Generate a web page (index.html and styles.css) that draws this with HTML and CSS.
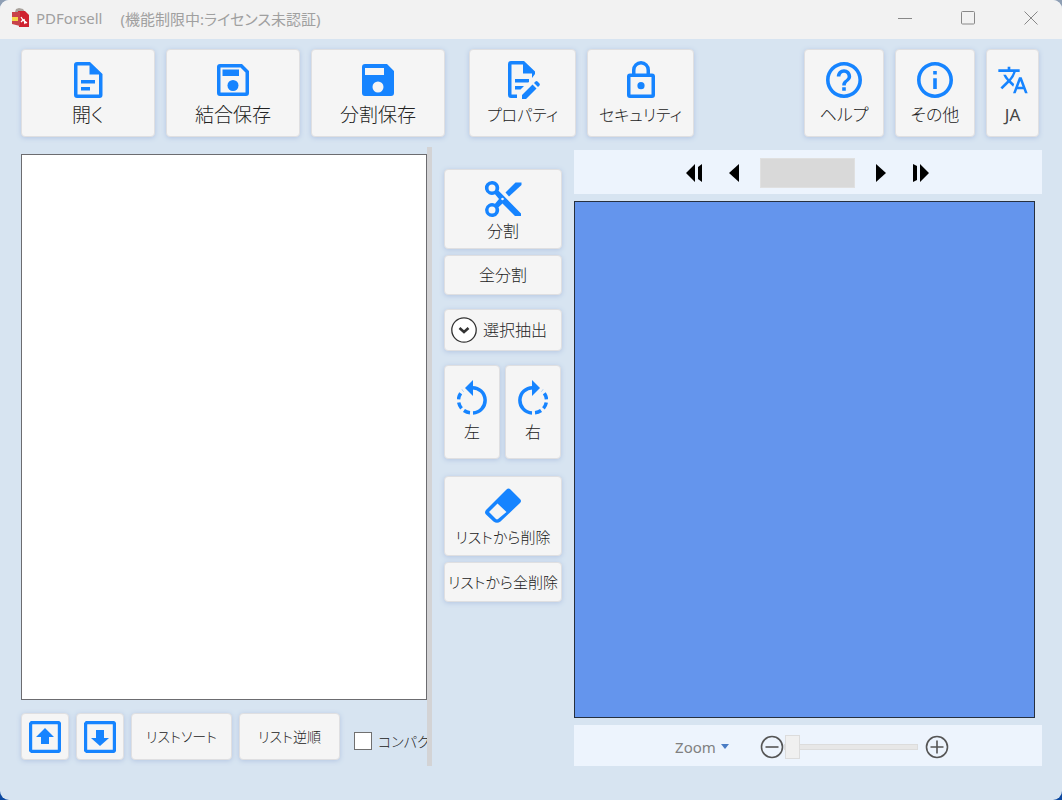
FILE: index.html
```html
<!DOCTYPE html>
<html lang="ja">
<head>
<meta charset="utf-8">
<meta name="viewport" content="width=device-width, initial-scale=1">
<title>PDForsell</title>
<link rel="stylesheet" href="styles.css">
</head>
<body>
<div class="window">
  <header class="titlebar">
    <svg class="app-icon" width="20" height="20" viewBox="0 0 20 20" aria-hidden="true">
      <path d="M4 4 5 1l3-1 4 1 2 3-2 3H4z" fill="#a9a29c"/>
      <path d="M7 3h7l4 4v12H8z" fill="#cf2230"/>
      <path d="M1 4h8v14l-8-2z" fill="#c8434a"/>
      <path d="M1 9h6v4H1z" fill="#f6d64a"/>
      <path d="M10 9l2 3 4 3M12 12l-2 2M13 11l1 5" stroke="#fff" stroke-width="1.300" fill="none"/>
    </svg>
    <h1 class="title"><span>PDForsell</span><span>(機能制限中:ライセンス未認証)</span></h1>
    <div class="window-controls">
      <button class="plain" aria-label="最小化"><svg width="14" height="14" viewBox="0 0 14 14"><path d="M0 7.500h14"/></svg></button>
      <button class="plain" aria-label="最大化"><svg width="14" height="14" viewBox="0 0 14 14"><rect x=".5" y=".5" width="13" height="12.500" rx="1"/></svg></button>
      <button class="plain" aria-label="閉じる"><svg width="14" height="14" viewBox="0 0 14 14"><path d="M.5.5l13 13M13.500.5l-13 13"/></svg></button>
    </div>
  </header>

  <nav class="toolbar">
    <div class="group">
      <button class="btn tool wide">
        <svg width="36" height="36" viewBox="0 0 36 36"><path fill-rule="evenodd" d="M7 0h13l12.500 12V33a3 3 0 0 1-3 3H7a3 3 0 0 1-3-3V3a3 3 0 0 1 3-3zM7.500 3.500v29H29V12.500H19.500v-9z"/><path d="M11 18h14v3.500H11zM11 25h9v3.500h-9z"/></svg>
        <span>開く</span></button>
      <button class="btn tool wide">
        <svg width="36" height="36" viewBox="0 0 36 36"><path fill-rule="evenodd" d="M5 2h22l7 7v22a3 3 0 0 1-3 3H5a3 3 0 0 1-3-3V5a3 3 0 0 1 3-3zM5.500 5.500v25h25V10.500l-5-5z"/><path d="M7.500 7.500H24V14H7.500z"/><circle cx="18" cy="23.500" r="5.500"/></svg>
        <span>結合保存</span></button>
      <button class="btn tool wide">
        <svg width="36" height="36" viewBox="0 0 36 36"><path fill-rule="evenodd" d="M5 2h22l7 7v22a3 3 0 0 1-3 3H5a3 3 0 0 1-3-3V5a3 3 0 0 1 3-3zM5 6v7h19V6zM18 19.500a5.500 5.500 0 1 0 0 11 5.500 5.500 0 0 0 0-11z"/></svg>
        <span>分割保存</span></button>
    </div>
    <div class="group">
      <button class="btn tool medium">
        <svg width="36" height="38" viewBox="0 0 36 38"><path d="M6 0h13l11 10.500v2.500l-3 4v-4.500H18V3.500H6.500v30H12V37H6a3 3 0 0 1-3-3V3a3 3 0 0 1 3-3z"/><path d="M10 18h14v3l-1 .5H10zM10 25h9l-3.500 3.500H10zM17 34l10.500-10.500 4 4L21 38h-4zM29 22l1.500-1.500q1-.8 2 0l2 2q.8 1 0 2L33 26z"/></svg>
        <span>プロパティ</span></button>
      <button class="btn tool medium">
        <svg width="36" height="38" viewBox="0 0 36 38"><path fill-rule="evenodd" d="M9 12.500V9a9 9 0 0 1 18 0v3.500h2a3 3 0 0 1 3 3V34a3 3 0 0 1-3 3H7a3 3 0 0 1-3-3V15.500a3 3 0 0 1 3-3zM12.500 12.500h11V9a5.500 5.500 0 0 0-11 0zM7.500 16v17.500h21V16z"/><circle cx="18" cy="24.700" r="3.600"/></svg>
        <span>セキュリティ</span></button>
    </div>
    <div class="group end">
      <button class="btn tool small">
        <svg width="36" height="36" viewBox="2 2 20 20"><path d="M11 18h2v-2h-2v2zm1-16C6.480 2 2 6.480 2 12s4.480 10 10 10 10-4.480 10-10S17.520 2 12 2zm0 18c-4.410 0-8-3.590-8-8s3.590-8 8-8 8 3.590 8 8-3.590 8-8 8zm0-14c-2.210 0-4 1.790-4 4h2c0-1.100.9-2 2-2s2 .9 2 2c0 2-3 1.750-3 5h2c0-2.250 3-2.500 3-5 0-2.210-1.790-4-4-4z"/></svg>
        <span>ヘルプ</span></button>
      <button class="btn tool small">
        <svg width="36" height="36" viewBox="2 2 20 20"><path d="M11 7h2v2h-2zm0 4h2v6h-2zm1-9C6.480 2 2 6.480 2 12s4.480 10 10 10 10-4.480 10-10S17.520 2 12 2zm0 18c-4.410 0-8-3.590-8-8s3.590-8 8-8 8 3.590 8 8-3.590 8-8 8z"/></svg>
        <span>その他</span></button>
      <button class="btn tool tiny">
        <svg width="32" height="36" viewBox="0 0 24 24"><path d="M12.870 15.070l-2.540-2.510.03-.03A17.520 17.520 0 0 0 14.070 6H17V4h-7V2H8v2H1v1.990h11.170C11.500 7.920 10.440 9.750 9 11.350 8.070 10.320 7.300 9.190 6.690 8h-2c.73 1.630 1.730 3.170 2.980 4.560l-5.090 5.020L4 19l5-5 3.110 3.110.76-2.040zM18.500 10h-2L12 22h2l1.120-3h4.750L21 22h2l-4.500-12zm-2.620 7l1.620-4.330L19.120 17h-3.240z"/></svg>
        <span>JA</span></button>
    </div>
  </nav>

  <main class="workspace">
    <section class="files">
      <div class="file-list" role="listbox" aria-label="ファイル一覧"></div>
      <div class="list-tools">
        <button class="btn square" aria-label="上へ"><svg width="32" height="32" viewBox="0 0 32 32"><rect x="1.500" y="1.500" width="29" height="29" rx="2" fill="none" stroke="#1684ff" stroke-width="3.400"/><path d="M16 7l9 9h-5v7h-8v-7H7z"/></svg></button>
        <button class="btn square" aria-label="下へ"><svg width="32" height="32" viewBox="0 0 32 32"><rect x="1.500" y="1.500" width="29" height="29" rx="2" fill="none" stroke="#1684ff" stroke-width="3.400"/><path d="M16 25l9-8h-5V9h-8v8H7z"/></svg></button>
        <button class="btn sort">リストソート</button>
        <button class="btn sort">リスト逆順</button>
        <label class="compact"><input type="checkbox"><span>コンパク</span></label>
      </div>
    </section>
    <div class="splitter" role="separator"></div>

    <section class="actions">
      <button class="btn stack">
        <svg width="38" height="38" viewBox="0 0 38 38"><path fill-rule="evenodd" d="M8 1a7 7 0 0 1 6.600 9.800L37 33.500V36h-6L18.500 23.500l-4 3.700A7 7 0 1 1 11 23.700l4-4.700-4-4.700A7 7 0 1 1 8 1zm0 3.500a3.500 3.500 0 1 0 0 7 3.500 3.500 0 0 0 0-7zm0 22a3.500 3.500 0 1 0 0 7 3.500 3.500 0 0 0 0-7zM18.500 17.700a1.300 1.300 0 1 0 0 2.600 1.300 1.300 0 0 0 0-2.600z"/><path d="M21.500 12.500 31.500 2.500h6V5L25 16.500z"/></svg>
        <span>分割</span></button>
      <button class="btn single">全分割</button>
      <button class="btn extract">
        <svg width="26" height="26" viewBox="0 0 26 26"><circle cx="13" cy="13" r="12.200" fill="#fff" stroke="#333" stroke-width="1.300"/><path d="M8.500 11l4.500 4 4.500-4" fill="none" stroke="#333" stroke-width="2.600"/></svg>
        <span>選択抽出</span></button>
      <div class="rotate">
        <button class="btn turn">
          <svg width="30" height="36" viewBox="0 0 30 36"><path d="M16 0v16L8 8z"/><path d="M15 7.700a12.600 12.600 0 0 1 1 25.200" class="arc"/><path d="M13 32.700a12.600 12.600 0 0 1-11.500-12.400 12.600 12.600 0 0 1 4.500-9.700" class="arc" stroke-dasharray="6.500 3.200"/></svg>
          <span>左</span></button>
        <button class="btn turn">
          <svg width="30" height="36" viewBox="0 0 30 36"><g transform="matrix(-1 0 0 1 30 0)"><path d="M16 0v16L8 8z"/><path d="M15 7.700a12.600 12.600 0 0 1 1 25.200" class="arc"/><path d="M13 32.700a12.600 12.600 0 0 1-11.500-12.400 12.600 12.600 0 0 1 4.500-9.700" class="arc" stroke-dasharray="6.500 3.200"/></g></svg>
          <span>右</span></button>
      </div>
      <button class="btn stack long">
        <svg width="38" height="36" viewBox="0 0 38 36"><path fill-rule="evenodd" d="M22.500 1.500q2-2 4 0l9.500 9.500q2 2 0 4L16.500 33.500q-3.500 2.500-7 0L2 26.500q-2-2 0-4.500zM13.500 15.500 5 24l7 7q1 .8 2 0l8.500-7z"/></svg>
        <span>リストから削除</span></button>
      <button class="btn single long">リストから全削除</button>
    </section>

    <section class="viewer">
      <div class="bar pager">
        <div class="pager-side">
          <button class="plain" aria-label="最初"><svg width="18" height="18" viewBox="0 0 18 18"><path d="M10 0v18L1 9zM17 0v18l-4-3V3z"/></svg></button>
          <button class="plain" aria-label="前"><svg width="18" height="18" viewBox="0 0 18 18"><path d="M14 0v18L4 9z"/></svg></button>
        </div>
        <input class="page-number" type="text" aria-label="ページ" disabled>
        <div class="pager-side">
          <button class="plain" aria-label="次"><svg width="18" height="18" viewBox="0 0 18 18"><path d="M4 0v18l10-9z"/></svg></button>
          <button class="plain" aria-label="最後"><svg width="18" height="18" viewBox="0 0 18 18"><path d="M8 0v18l9-9zM1 0v18l4-2V2z"/></svg></button>
        </div>
      </div>
      <div class="preview"></div>
      <div class="bar zoom">
        <button class="plain zoom-menu">Zoom <svg width="8" height="5" viewBox="0 0 8 5"><path d="M0 0h8L4 5z" fill="#4a7cc4"/></svg></button>
        <div class="zoom-slider">
          <button class="plain" aria-label="縮小"><svg class="round" width="24" height="24" viewBox="0 0 24 24"><circle cx="12" cy="12" r="10.500"/><path d="M5.500 12h13"/></svg></button>
          <input type="range" min="0" max="100" value="0" aria-label="Zoom">
          <button class="plain" aria-label="拡大"><svg class="round" width="24" height="24" viewBox="0 0 24 24"><circle cx="12" cy="12" r="10.500"/><path d="M5.500 12h13M12 5.500v13"/></svg></button>
        </div>
      </div>
    </section>
  </main>
</div>
</body>
</html>
```
FILE: styles.css
```css
* { box-sizing: border-box; }

html { background: linear-gradient(#8f9fb4, #0c48a0); }

body {
  margin: 0;
  font-family: "Noto Sans", "Noto Sans CJK JP", sans-serif;
  font-feature-settings: "palt";
  font-size: 16px;
  font-weight: 300;
  color: #222;
}

button, input { font: inherit; font-feature-settings: inherit; color: inherit; }

.window {
  display: flex;
  flex-direction: column;
  min-height: 100vh;
  border-radius: 9px;
  overflow: hidden;
  background: #d7e4f1;
}

.titlebar {
  display: flex;
  align-items: center;
  gap: 5px;
  height: 39px;
  padding: 0 24px 3px 11px;
  background: #f2f2f2;
}

.title {
  display: flex;
  gap: 18px;
  margin: 0;
  font-size: 15px;
  font-weight: 400;
  color: #a0a0a0;
}

.window-controls { display: flex; gap: 49px; margin-left: auto; }
.window-controls svg { fill: none; stroke: #888; }

.plain {
  display: flex;
  align-items: center;
  padding: 0;
  border: 0;
  background: none;
}

.btn {
  display: flex;
  align-items: center;
  justify-content: center;
  padding: 0;
  border: 1px solid #dfdfe1;
  border-radius: 4px;
  background: #f5f5f5;
  box-shadow: 0 1px 5px #b4c6e2;
  line-height: 24px;
  white-space: nowrap;
}

.btn svg { fill: #1684ff; flex: none; }

.toolbar { display: flex; gap: 24px; padding: 10px 23px 10px 21px; }
.group { display: flex; gap: 11px; }
.end { margin-left: auto; }

.tool {
  flex-direction: column;
  justify-content: space-between;
  height: 88px;
  padding: 12px 0 9px;
}

.wide { width: 134px; font-size: 19px; }
.medium { width: 107px; padding-top: 11px; font-size: 16px; }
.small { width: 80px; font-size: 17px; }
.tiny { width: 53px; font-size: 17px; font-weight: 400; color: #444; }

.workspace {
  flex: 1;
  display: grid;
  grid-template-columns: minmax(0, 406px) 5px 118px minmax(0, 1fr);
  padding: 0 20px 34px 21px;
}

.files { display: flex; flex-direction: column; gap: 13px; padding-top: 7px; }

.file-list { flex: 1; border: 1px solid #6c6c70; background: #fff; }

.list-tools {
  display: flex;
  align-items: center;
  gap: 7px;
  padding-bottom: 6px;
}

.square { width: 48px; height: 47px; flex: none; }
.sort { width: 101px; height: 47px; flex: none; font-size: 14px; }

.compact {
  display: flex;
  align-items: center;
  gap: 6px;
  margin: 8px 0 0 7px;
  font-size: 14px;
  white-space: nowrap;
}

.compact input {
  appearance: none;
  flex: none;
  width: 18px;
  height: 18px;
  margin: 0;
  border: 1px solid #707070;
  background: #fff;
}

.splitter { background: #d3d3d5; }

.actions {
  display: flex;
  flex-direction: column;
  width: 118px;
  margin-left: 12px;
  padding-top: 22px;
}

.stack { flex-direction: column; gap: 1px; height: 80px; padding-top: 4px; }
.stack + .single { margin-top: 6px; }
.single { height: 40px; }
.long { font-size: 15px; }
.extract { gap: 6px; height: 42px; margin-top: 14px; padding-right: 8px; }
.rotate { display: flex; gap: 5px; margin: 14px 1px 17px 0; }
.turn { flex: 1; flex-direction: column; gap: 4px; height: 94px; }
.arc { fill: none; stroke: #1684ff; stroke-width: 3.500; }

.viewer { display: flex; flex-direction: column; padding: 3px 0 0 24px; }
.bar { display: flex; align-items: center; justify-content: center; background: #edf4fd; }

.pager { gap: 17px; height: 44px; padding: 2px 2px 0 0; }
.pager-side { display: flex; gap: 22px; }
.page-number { width: 95px; height: 30px; border: 1px solid #e0e0e0; background: #d9d9d9; }

.preview {
  flex: 1;
  margin: 7px 7px 7px 0;
  border: 1px solid #26303f;
  background: #6495ed;
}

.zoom { gap: 31px; height: 41px; padding: 2px 0 0 8px; }
.zoom-menu { gap: 5px; font-size: 15px; font-weight: 400; color: #808080; }
.zoom-slider { display: flex; align-items: center; }
.round { fill: none; stroke: #555; stroke-width: 1.600; }

input[type="range"] {
  appearance: none;
  width: 134px;
  height: 24px;
  margin: 0 7px 0 0;
  background: none;
}

input[type="range"]::-webkit-slider-runnable-track {
  height: 6px;
  border: 1px solid #dcdcdc;
  background: #e7e7e7;
}

input[type="range"]::-webkit-slider-thumb {
  appearance: none;
  width: 15px;
  height: 24px;
  margin-top: -10px;
  border: 1px solid #dcdcdc;
  background: #f0f0f0;
}
```
